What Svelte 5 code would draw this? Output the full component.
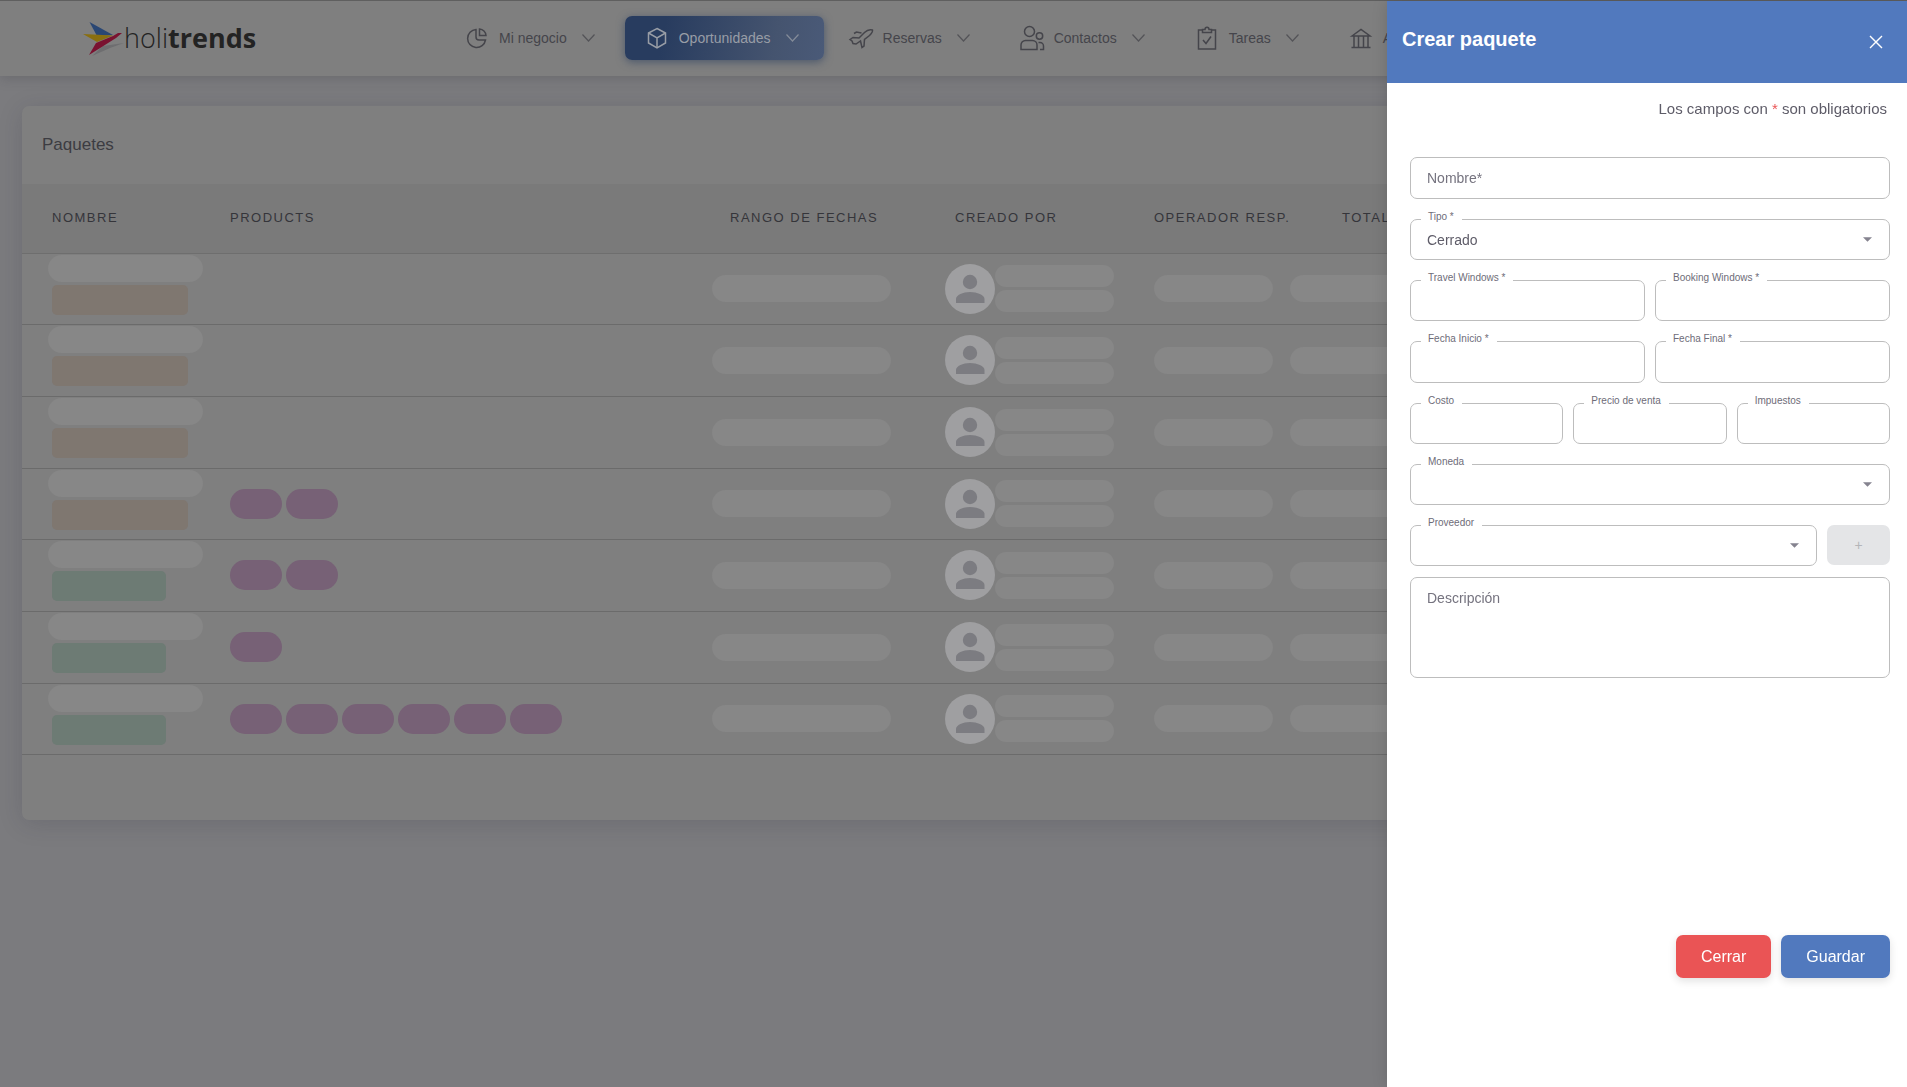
<script>
  const navItems = [
    { label: 'Mi negocio', icon: 'pie' },
    { label: 'Oportunidades', icon: 'box', active: true },
    { label: 'Reservas', icon: 'plane' },
    { label: 'Contactos', icon: 'users' },
    { label: 'Tareas', icon: 'task' },
    { label: 'A', icon: 'bank' }
  ];

  const rows = [
    { status: 'draft', products: 0 },
    { status: 'draft', products: 0 },
    { status: 'draft', products: 0 },
    { status: 'draft', products: 2 },
    { status: 'active', products: 2 },
    { status: 'active', products: 1 },
    { status: 'active', products: 6 }
  ];

  let open = $state(true);
  let tipo = $state('Cerrado');
  let moneda = $state('');
  let proveedor = $state('');

  function close() {
    open = false;
  }
</script>

{#snippet caret()}
  <svg class="caret" viewBox="0 0 10 5" aria-hidden="true"><path d="M0 0h10L5 5z" /></svg>
{/snippet}

{#snippet field(id, label, tall = false)}
  <div class="field">
    <input {id} type="text" class:tall />
    <label for={id}>{label}</label>
  </div>
{/snippet}

<header class="topbar">
  <a class="logo" href="#inicio">
    <svg width="41" height="42" viewBox="0 0 41 42" aria-hidden="true">
      <path d="M9 39 20 29 41 26 27 31z" fill="#6e6e70" />
      <path d="M6.500 5 30 18 14 19z" fill="#2a4774" />
      <path d="M0 17 30 18.500 14 25z" fill="#8a6f10" />
      <path d="M6 38 13 26 30 19 35 16h4l-6 5z" fill="#7a1230" />
    </svg>
    <span class="brand">holi<b>trends</b></span>
  </a>

  <nav>
    {#each navItems as item}
      <a class="nav-item" class:active={item.active} href="#{item.icon}">
        <svg class="icon" viewBox="0 0 24 24" aria-hidden="true">
          {#if item.icon === 'pie'}
            <path d="M11 3.500a9 9 0 1 0 9.500 10.500h-6.500a3 3 0 0 1-3-3z" />
            <path d="M14.500 3v6.500h6.500a7 7 0 0 0-6.500-6.500z" />
          {:else if item.icon === 'box'}
            <path d="M12 2.500 20.500 7v10L12 22l-8.500-5V7z" />
            <path d="M3.500 7 12 12l8.500-5M12 12v10" />
          {:else if item.icon === 'plane'}
            <path d="M1 13.500 4 11.500l6 .5 5.500-5.500c2-2 5-3.500 8-2.500.5 2-1.500 4-3 5.500l-5 4-.5 6.500-2 1.500-1.500-6.500-4.500 3-3-.5-1-2.500z" />
            <path d="m5 7.500 2.500-1.500 5 1" />
          {:else if item.icon === 'users'}
            <circle cx="9.500" cy="5.500" r="5" />
            <path d="M1 23.500v-4.500a4.500 4.500 0 0 1 4.500-4.500h7a4.500 4.500 0 0 1 4.500 4.500v4.500z" />
            <circle cx="19.500" cy="10" r="3.200" />
            <path d="M18.500 16.500h1.500a3.500 3.500 0 0 1 3.500 3.500v3.500h-3.500" />
          {:else if item.icon === 'task'}
            <path d="M7.500 4H3.500v19h17V4h-4" />
            <path d="M7.500 6.500v-3h2.500c0-3 4-3 4 0h2.500v3z" />
            <path d="m8 14 3 3.500 5-7" />
          {:else}
            <path d="M3 10 12 3.500l9 6.500zM2.500 21.500h19M5 10v11.500M9.500 10v11.500M14.500 10v11.500M19 10v11.500" />
          {/if}
        </svg>
        <span>{item.label}</span>
        <svg class="chevron" viewBox="0 0 13 8" aria-hidden="true"><path d="m.5.500 6 6.500 6-6.500" /></svg>
      </a>
    {/each}
  </nav>
</header>

<main>
  <section class="card">
    <h1>Paquetes</h1>
    <table>
      <colgroup>
        <col class="c-name" />
        <col class="c-products" />
        <col class="c-range" />
        <col class="c-author" />
        <col class="c-operator" />
        <col />
      </colgroup>
      <thead>
        <tr>
          <th>Nombre</th>
          <th>Products</th>
          <th>Rango de fechas</th>
          <th>Creado por</th>
          <th>Operador resp.</th>
          <th class="total">Total</th>
        </tr>
      </thead>
      <tbody>
        {#each rows as row}
          <tr>
            <td class="name">
              <div class="pill title"></div>
              <div class="badge {row.status}"></div>
            </td>
            <td class="products">
              <div class="tags">
                {#each Array(row.products) as _}
                  <span class="tag"></span>
                {/each}
              </div>
            </td>
            <td class="range"><div class="pill wide"></div></td>
            <td class="author">
              <div class="person">
                <svg width="50" height="50" viewBox="0 0 50 50" aria-hidden="true">
                  <circle cx="25" cy="25" r="25" fill="#9f9fa1" />
                  <circle cx="25" cy="18" r="7.200" fill="#7c7c81" />
                  <path d="M11 39v-4c0-4 7-7 14-7s14.500 3 14.500 7v4z" fill="#7c7c81" />
                </svg>
                <div class="lines">
                  <div class="pill small"></div>
                  <div class="pill small"></div>
                </div>
              </div>
            </td>
            <td class="operator"><div class="pill"></div></td>
            <td class="amount"><div class="pill"></div></td>
          </tr>
        {/each}
      </tbody>
    </table>
  </section>
</main>

{#if open}
  <aside class="drawer">
    <div class="drawer-head">
      <h2>Crear paquete</h2>
      <button class="close" type="button" aria-label="Cerrar panel" onclick={close}>
        <svg width="14" height="14" viewBox="0 0 14 14" aria-hidden="true"><path d="m1 1 12 12M13 1 1 13" /></svg>
      </button>
    </div>

    <form onsubmit={(e) => e.preventDefault()}>
      <p class="hint">Los campos con <span>*</span> son obligatorios</p>

      <div class="fields">
        <input class="tall" type="text" placeholder="Nombre*" aria-label="Nombre" />

        <div class="field">
          <select id="tipo" bind:value={tipo}>
            <option>Cerrado</option>
            <option>Abierto</option>
          </select>
          <label for="tipo">Tipo *</label>
          {@render caret()}
        </div>

        <div class="group">
          {@render field('travel', 'Travel Windows *')}
          {@render field('booking', 'Booking Windows *')}
        </div>

        <div class="group">
          {@render field('inicio', 'Fecha Inicio *', true)}
          {@render field('final', 'Fecha Final *', true)}
        </div>

        <div class="group">
          {@render field('costo', 'Costo')}
          {@render field('precio', 'Precio de venta')}
          {@render field('impuestos', 'Impuestos')}
        </div>

        <div class="field">
          <select id="moneda" bind:value={moneda}>
            <option value=""></option>
            <option>USD</option>
          </select>
          <label for="moneda">Moneda</label>
          {@render caret()}
        </div>

        <div class="group">
          <div class="field">
            <select id="proveedor" bind:value={proveedor}>
              <option value=""></option>
            </select>
            <label for="proveedor">Proveedor</label>
            {@render caret()}
          </div>
          <button class="add" type="button" disabled>+</button>
        </div>
      </div>

      <textarea placeholder="Descripción" aria-label="Descripción"></textarea>

      <div class="actions">
        <button class="btn danger" type="button" onclick={close}>Cerrar</button>
        <button class="btn primary" type="submit">Guardar</button>
      </div>
    </form>
  </aside>
{/if}

<style>
  :global(body) {
    min-height: 100vh;
    box-sizing: border-box;
    border-top: 1px solid #5f5f5f;
    background: #7b7b7e;
    font-family: 'Liberation Sans', Arial, sans-serif;
    overflow: hidden;
  }

  * {
    box-sizing: border-box;
  }

  /* Top bar */
  .topbar {
    display: flex;
    align-items: center;
    height: 75px;
    padding: 0 0 2px 83px;
    background: #7f7f7f;
    box-shadow: 0 2px 12px rgba(40, 40, 50, 0.22);
  }

  .logo {
    display: flex;
    flex: 0 0 auto;
    align-items: center;
    width: 362px;
    color: #232323;
    text-decoration: none;
  }

  .brand {
    font-family: 'Open Sans', 'Noto Sans', sans-serif;
    font-size: 27px;
    font-weight: 300;
    line-height: 40px;
  }

  .brand b {
    font-weight: 700;
  }

  nav {
    display: flex;
    gap: 5px;
    overflow: hidden;
    padding: 16px 0;
  }

  .nav-item {
    display: flex;
    flex: 0 0 auto;
    align-items: center;
    height: 44px;
    padding: 0 25px 0 20px;
    border-radius: 7px;
    color: #45454b;
    font-size: 14px;
    text-decoration: none;
  }

  .nav-item.active {
    color: #989da6;
    background: linear-gradient(100deg, #283c5f 20%, #45546f 75%, #4a5a78);
    box-shadow: 0 2px 8px rgba(40, 61, 95, 0.6);
  }

  .icon {
    width: 24px;
    height: 24px;
    margin-right: 10px;
    stroke-width: 1.5;
  }

  .chevron {
    width: 13px;
    height: 8px;
    margin-left: 15px;
    stroke-width: 1.2;
    opacity: 0.75;
  }

  .icon,
  .chevron {
    fill: none;
    stroke: currentColor;
    overflow: visible;
  }

  /* Package list */
  main {
    padding: 30px 22px;
  }

  .card {
    padding-bottom: 65px;
    border-radius: 7px;
    background: #7f7f7f;
    box-shadow: 0 4px 24px rgba(40, 40, 55, 0.16);
  }

  h1 {
    margin: 0;
    padding-left: 20px;
    color: #3c3c42;
    font-size: 17px;
    font-weight: 400;
    line-height: 78px;
  }

  table {
    width: 100%;
    table-layout: fixed;
    border-collapse: separate;
    border-spacing: 0;
  }

  .c-name {
    width: 178px;
  }

  .c-products {
    width: 500px;
  }

  .c-range {
    width: 225px;
  }

  .c-author {
    width: 199px;
  }

  .c-operator {
    width: 154px;
  }

  th {
    height: 70px;
    padding: 0 0 2px 30px;
    border-bottom: 1px solid #6e6e6e;
    background: #7a7a7a;
    color: #35353a;
    font-size: 13px;
    font-weight: 400;
    letter-spacing: 1.5px;
    text-align: left;
    text-transform: uppercase;
    white-space: nowrap;
  }

  th.total {
    padding-left: 64px;
  }

  tbody tr {
    height: 72px;
  }

  tbody tr:nth-child(3n + 1) {
    height: 71px;
  }

  td {
    padding: 0 0 1px;
    border-bottom: 1px solid #6b6b6b;
  }

  td.name {
    padding-top: 1px;
    padding-left: 26px;
    vertical-align: top;
  }

  td.products {
    padding-left: 30px;
  }

  td.range {
    padding-left: 12px;
  }

  td.author {
    padding-left: 20px;
  }

  td.operator {
    padding-left: 30px;
  }

  td.amount {
    padding-left: 12px;
  }

  .pill {
    width: 119px;
    height: 27px;
    border-radius: 14px;
    background: #878787;
  }

  .pill.title {
    width: 155px;
  }

  .pill.wide {
    width: 179px;
  }

  .pill.small {
    height: 22px;
    border-radius: 11px;
  }

  .badge {
    width: 136px;
    height: 30px;
    margin: 3px 0 0 4px;
    border-radius: 5px;
    background: #7f7770;
  }

  .badge.active {
    width: 114px;
    background: #6d7b74;
  }

  .tags {
    display: flex;
    gap: 4px;
  }

  .tag {
    width: 52px;
    height: 30px;
    border-radius: 15px;
    background: #776176;
  }

  .person {
    display: flex;
    align-items: center;
  }

  .lines {
    display: grid;
    gap: 3px;
  }

  /* Drawer */
  .drawer {
    position: fixed;
    top: 1px;
    right: 0;
    bottom: 0;
    display: flex;
    flex-direction: column;
    width: 520px;
    background: #fff;
    box-shadow: 0 0 15px rgba(0, 0, 0, 0.14);
  }

  .drawer-head {
    display: flex;
    align-items: center;
    justify-content: space-between;
    height: 82px;
    padding: 0 18px 6px 15px;
    background: #5179be;
    color: #fff;
  }

  h2 {
    margin: 0;
    font-size: 20px;
    line-height: 28px;
  }

  .close {
    display: flex;
    margin-top: 6px;
    padding: 6px;
    border: 0;
    background: none;
    cursor: pointer;
  }

  .close path {
    stroke: #fff;
    stroke-width: 1.4;
  }

  form {
    display: flex;
    flex: 1;
    flex-direction: column;
    padding: 16px 17px 109px 23px;
  }

  .hint {
    margin: 0 3px 38px;
    color: #5e5c68;
    font-size: 15px;
    line-height: 20px;
    text-align: right;
  }

  .hint span {
    color: #ea5455;
  }

  .fields {
    display: flex;
    flex-direction: column;
    gap: 20px;
  }

  .group {
    display: flex;
    gap: 10px;
  }

  .field {
    position: relative;
    flex: 1;
  }

  input,
  select,
  textarea {
    display: block;
    width: 100%;
    height: 41px;
    padding: 0 16px;
    border: 1px solid #bdbdbd;
    border-radius: 7px;
    background: #fff;
    color: #5e5c68;
    font-family: inherit;
    font-size: 14px;
    appearance: none;
  }

  input.tall {
    height: 42px;
  }

  textarea {
    height: 101px;
    margin-top: 11px;
    padding-top: 12px;
    resize: none;
  }

  ::placeholder {
    color: #75737f;
  }

  .field label {
    position: absolute;
    top: -8px;
    left: 11px;
    padding: 0 8px 0 7px;
    background: #fff;
    color: #6e6c78;
    font-size: 10px;
    line-height: 12px;
  }

  .caret {
    position: absolute;
    top: 18px;
    right: 18px;
    width: 9px;
    height: 5px;
    fill: #85838f;
    pointer-events: none;
  }

  .add {
    width: 63px;
    height: 40px;
    border: 0;
    border-radius: 7px;
    background: #e4e5e7;
    color: #b4b5b9;
    font-family: inherit;
    font-size: 14px;
  }

  .actions {
    display: flex;
    justify-content: flex-end;
    gap: 10px;
    margin-top: auto;
  }

  .btn {
    height: 43px;
    padding: 0 25px;
    border: 0;
    border-radius: 7px;
    color: #fff;
    font-family: inherit;
    font-size: 16px;
    box-shadow: 0 3px 8px rgba(0, 0, 0, 0.12);
    cursor: pointer;
  }

  .danger {
    background: #ea5455;
  }

  .primary {
    background: #5179be;
  }
</style>
